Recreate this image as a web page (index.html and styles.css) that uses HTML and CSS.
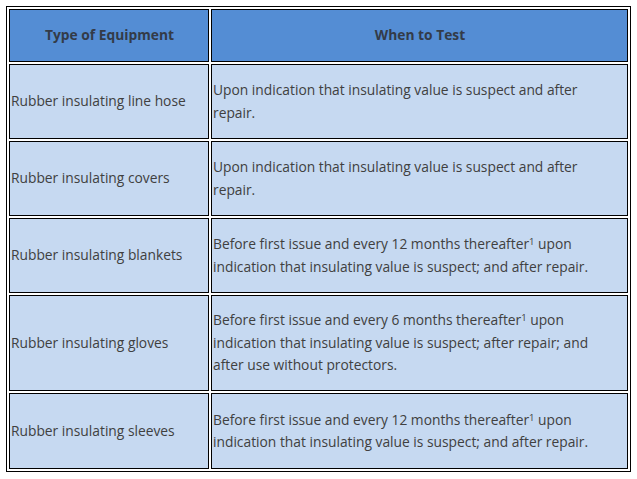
FILE: index.html
```html
<!DOCTYPE html>
<html>
<head>
<meta charset="utf-8">
<link rel="stylesheet" href="styles.css">
</head>
<body>
<table class="eq-table">
  <thead>
    <tr class="head-row">
      <th class="col-type">Type of Equipment</th>
      <th class="col-when">When to Test</th>
    </tr>
  </thead>
  <tbody>
    <tr class="row-std">
      <td>Rubber insulating line hose</td>
      <td class="when">Upon indication that insulating value is suspect and after repair.</td>
    </tr>
    <tr class="row-std">
      <td>Rubber insulating covers</td>
      <td class="when">Upon indication that insulating value is suspect and after repair.</td>
    </tr>
    <tr class="row-std">
      <td>Rubber insulating blankets</td>
      <td class="when">Before first issue and every 12 months thereafter<sup class="fn">1</sup> upon indication that insulating value is suspect; and after repair.</td>
    </tr>
    <tr class="row-tall">
      <td>Rubber insulating gloves</td>
      <td class="when">Before first issue and every 6 months thereafter<sup class="fn">1</sup> upon indication that insulating value is suspect; after repair; and after use without protectors.</td>
    </tr>
    <tr class="row-last">
      <td>Rubber insulating sleeves</td>
      <td class="when">Before first issue and every 12 months thereafter<sup class="fn">1</sup> upon indication that insulating value is suspect; and after repair.</td>
    </tr>
  </tbody>
</table>
</body>
</html>
```
FILE: styles.css
```css
html, body {
  margin: 0;
  padding: 0;
  background: #ffffff;
}
body {
  padding: 6px;
  font-family: "Open Sans", "Liberation Sans", sans-serif;
  font-size: 13.8px;
  color: #404040;
}
.eq-table {
  width: 625px;
  border: 1px solid #000;
  border-collapse: separate;
  border-spacing: 2px;
  table-layout: fixed;
}
.eq-table th,
.eq-table td {
  border: 1px solid #000;
  padding: 0 0 0 1px;
  vertical-align: middle;
  text-align: left;
  line-height: 22.5px;
  box-sizing: border-box;
}
.eq-table th {
  background: #548dd4;
  color: #333b48;
  font-weight: 700;
  text-align: center;
  height: 53px;
}
.eq-table td {
  background: #c6d9f1;
}
.eq-table td.when {
  padding-right: 14px;
}
.col-type {
  width: 200px;
}
.row-std td {
  height: 75px;
}
.row-tall td {
  height: 96px;
}
.row-last td {
  height: 76px;
}
.fn {
  font-size: 9.5px;
  line-height: 1;
  vertical-align: 0.45em;
}
```
